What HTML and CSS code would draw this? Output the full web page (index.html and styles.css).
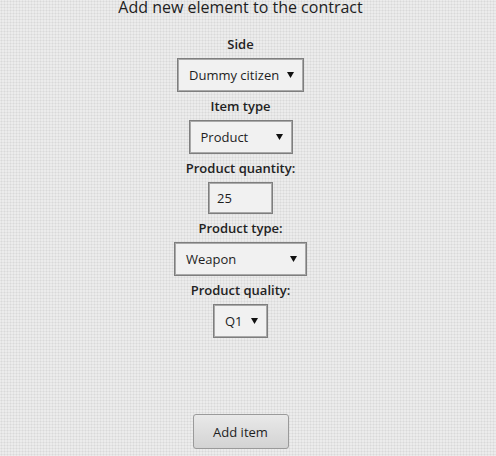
FILE: index.html
```html
<!DOCTYPE html>
<html lang="en">
<head>
<meta charset="utf-8">
<title>Add new element to the contract</title>
<link rel="stylesheet" href="styles.css">
</head>
<body>
<div class="page">
  <h1 class="title">Add new element to the contract</h1>
  <form class="form">
    <div class="label">Side</div>
    <div class="select select--side"><span>Dummy citizen</span><svg class="arrow" width="7" height="6" viewBox="0 0 7 6"><path d="M0 0H7L3.5 6Z"/></svg></div>
    <div class="label">Item type</div>
    <div class="select select--item"><span>Product</span><svg class="arrow" width="7" height="6" viewBox="0 0 7 6"><path d="M0 0H7L3.5 6Z"/></svg></div>
    <div class="label">Product quantity:</div>
    <div class="input">25</div>
    <div class="label">Product type:</div>
    <div class="select select--type"><span>Weapon</span><svg class="arrow" width="7" height="6" viewBox="0 0 7 6"><path d="M0 0H7L3.5 6Z"/></svg></div>
    <div class="label">Product quality:</div>
    <div class="select select--quality"><span>Q1</span><svg class="arrow" width="7" height="6" viewBox="0 0 7 6"><path d="M0 0H7L3.5 6Z"/></svg></div>
    <button type="button" class="button">Add item</button>
  </form>
</div>
</body>
</html>
```
FILE: styles.css
```css
html, body {
  margin: 0;
  padding: 0;
}
body {
  width: 496px;
  height: 456px;
  overflow: hidden;
  background-color: #ececec;
  background-image: radial-gradient(circle, #d9d9d9 0.9px, transparent 1.1px);
  background-size: 3px 3px;
  font-family: "Open Sans", "DejaVu Sans", sans-serif;
  color: #1e1e1e;
}
.page {
  width: 481px;
  display: flex;
  flex-direction: column;
  align-items: center;
}
.title {
  margin: 0;
  padding-top: 1px;
  font-size: 16px;
  line-height: 13px;
  font-weight: 400;
  color: #1e1e1e;
}
.form {
  display: flex;
  flex-direction: column;
  align-items: center;
  margin-top: 21px;
}
.label {
  font-size: 13px;
  font-weight: 600;
  line-height: 18px;
  margin: 5px 0 5px;
  color: #222;
}
.form > .label:first-child {
  margin-top: 0;
}
.select {
  box-sizing: border-box;
  height: 34px;
  display: flex;
  align-items: center;
  justify-content: space-between;
  padding: 0 9px 0 11px;
  background: #f1f1f1;
  border: 1px solid #7e7e7e;
  box-shadow: inset 0 0 0 1px #a9a9a9;
  font-size: 13px;
  color: #1e1e1e;
}
.select--side { width: 127px; }
.select--item { width: 104px; }
.select--type { width: 133px; }
.select--quality { width: 55px; }
.arrow {
  fill: #111;
  flex: none;
}
.input {
  box-sizing: border-box;
  width: 65px;
  height: 32px;
  display: flex;
  align-items: center;
  padding: 0 8px;
  background: #f1f1f1;
  border: 1px solid #7e7e7e;
  box-shadow: inset 0 0 0 1px #a9a9a9;
  font-size: 13px;
  color: #1e1e1e;
}
.button {
  box-sizing: border-box;
  width: 96px;
  height: 35px;
  margin-top: 76px;
  border: 1px solid #9a9a9a;
  border-radius: 3px;
  background: linear-gradient(#e9e9e9, #d3d3d3);
  font-family: "Open Sans", "DejaVu Sans", sans-serif;
  font-size: 13px;
  color: #1e1e1e;
  padding: 0;
}
```
